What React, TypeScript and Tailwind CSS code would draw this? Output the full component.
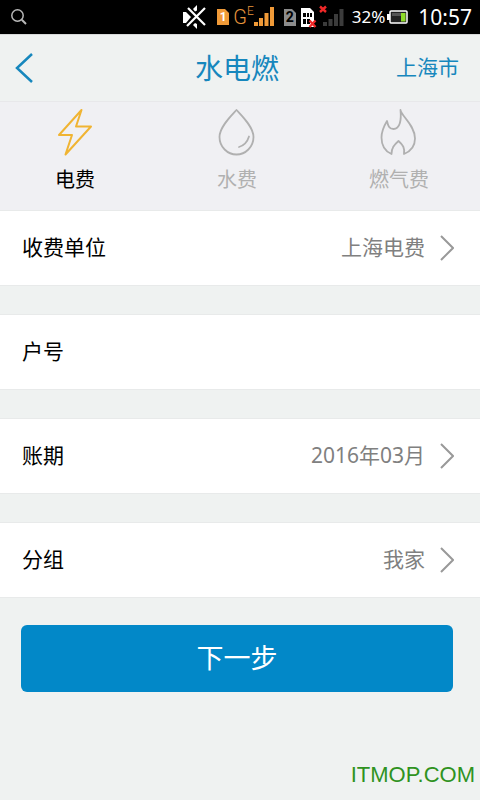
import React, { useState } from 'react';

interface RowProps {
    label: string;
    value: string;
}

const StatusBar: React.FC = () => (
    <div className="flex h-[34px] shrink-0 items-center bg-black pl-[11px] pr-2 text-white">
        <svg width="16" height="16" viewBox="0 0 16 16" fill="none" stroke="#b8b8b8" strokeWidth="1.5">
            <circle cx="6.5" cy="6.5" r="5.7" />
            <path d="M10.8 10.8 15 15" strokeWidth="2" />
        </svg>

        <div className="ml-auto flex items-center">
            {/* Muted speaker */}
            <svg width="24" height="24" viewBox="0 0 24 24" fill="none" stroke="#fff">
                <path d="M0 7h3l5 5-5 6H0z" fill="#fff" stroke="none" />
                <path d="M5 3 22 20M22 3 4 21" strokeWidth="2.2" />
                <path d="m10 4 4-4v5.500l-2 1zM10 20l4 4v-5l-2-1z" fill="#fff" stroke="none" />
            </svg>

            {/* First SIM */}
            <span className="relative ml-[10px] flex h-4 w-3 items-center justify-center font-['Roboto'] text-[12px] font-bold leading-4 text-white">
                <svg className="absolute inset-0" width="12" height="16" viewBox="0 0 12 16">
                    <path d="M0 0h8l4 4v12H0z" fill="#f09a38" />
                </svg>
                <span className="relative">1</span>
            </span>
            <span className="ml-1 flex h-6 items-start font-['Roboto'] font-light text-[#e8953c]">
                <span className="text-[20px] leading-[24px]">G</span>
                <span className="text-[12px] leading-[12px]">E</span>
            </span>
            <svg width="20" height="20" viewBox="0 0 20 20" fill="#f09a38">
                <path d="M0 15h4v4H0zM5 11h4v8H5zM10.500 6h4v13h-4zM16 0h4v19h-4z" />
            </svg>

            {/* Second SIM, no service */}
            <span className="relative ml-[10px] flex h-[17px] w-3 items-center justify-center font-['Roboto'] text-[14px] font-bold leading-4 text-black">
                <svg className="absolute inset-0" width="12" height="17" viewBox="0 0 12 17">
                    <path d="M0 0h8l4 4v13H0z" fill="#8c8c8c" />
                </svg>
                <span className="relative">2</span>
            </span>
            <svg className="ml-[5px]" width="43" height="24" viewBox="0 0 43 24">
                <path d="M0 3h9l4 4v15H0z" fill="#fff" />
                <path d="M2 8h3v4H2zM6 8h2v4H6zM9 8h2v4H9zM2 14h3v5H2zM6 14h3v5H6z" fill="#000" />
                <path d="m8.500 15.500 6 6.500M14.500 15.500l-6 6.500M19 1.500l6 5.500M25 1.500l-6 5.500" stroke="#f02828" strokeWidth="2.400" />
                <path d="M22 17h4v4h-4zM27.500 14h4v7h-4zM33 9h4v12h-4zM38.500 4h4v17h-4z" fill="#3c3c3c" />
            </svg>

            <span className="ml-2 font-['Noto_Sans'] text-[17px] leading-6">32%</span>
            <svg className="ml-[2px]" width="21" height="16" viewBox="0 0 21 16">
                <path d="M0 5h3v6H0z" fill="#fff" />
                <rect x="3" y="2" width="17" height="12" rx="1" fill="#222" stroke="#fff" strokeWidth="1.500" />
                <path d="M5 4h9v3H5z" fill="#555" />
                <path d="M14 4h4.500v8.500H14z" fill="#8edb28" />
            </svg>
            <span className="ml-[10px] font-['Noto_Sans'] text-[21px] leading-6">10:57</span>
        </div>
    </div>
);

const BoltIcon = () => (
    <svg width="54" height="48" viewBox="0 0 54 48" fill="none" stroke="currentColor" strokeWidth="2" strokeLinejoin="round">
        <path d="M33.500 2 11 27h13L17.500 46.500 43 18.500H28z" />
    </svg>
);

const DropIcon = () => (
    <svg width="54" height="48" viewBox="0 0 54 48" fill="none" stroke="currentColor" strokeWidth="1.800" strokeLinejoin="round" strokeLinecap="round">
        <path d="M26.500 2C21 8 9.500 19 9.500 29c0 10 8 17.500 17 17.500s17-7.500 17-17.500C43.500 19 32 8 26.500 2z" />
        <path d="M39 28.500c-1.500 5-5 9-10 10.500" />
    </svg>
);

const FlameIcon = () => (
    <svg width="54" height="48" viewBox="0 0 54 48" fill="none" stroke="currentColor" strokeWidth="1.800" strokeLinejoin="round">
        <path d="M28.500 2c0 5 14.500 15 14.500 28.500 0 6.500-3.500 12.500-11 15.500 1-6-1-9-5.500-13-4.500 4-7 7-7 13C12.500 43 9.500 37 9.500 29.500c0-6 2.500-11.500 5.500-16.500 1 4.500 2 8 6.500 8 6.500 0 8-9 7-19z" />
    </svg>
);

const Chevron = () => (
    <svg className="shrink-0" width="14" height="26" viewBox="0 0 14 26" fill="none" stroke="#999" strokeWidth="2">
        <path d="m1 1 12 12L1 25" />
    </svg>
);

const Row: React.FC<RowProps> = ({ label, value }) => (
    <button
        type="button"
        className="flex h-[76px] w-full items-center border-y border-[#e8eaea] bg-white pl-[22px] pr-[26px] text-left"
    >
        <span className="text-[21px] text-black">{label}</span>
        <span className="ml-auto mr-[15px] text-[21px] text-[#808080]">{value}</span>
        <Chevron />
    </button>
);

const tabs = [
    { id: 'power', label: '电费', Icon: BoltIcon },
    { id: 'water', label: '水费', Icon: DropIcon },
    { id: 'gas', label: '燃气费', Icon: FlameIcon },
];

const App: React.FC = () => {
    const [active, setActive] = useState('power');
    const [account, setAccount] = useState('');

    return (
        <div className="flex min-h-screen flex-col bg-[#eff2f1] font-['Noto_Sans','Noto_Sans_CJK_SC',sans-serif]">
            <StatusBar />

            <header className="grid h-[67px] shrink-0 grid-cols-3 items-center border-t border-[#d8dada] pl-[15px] pr-[21px] text-[#1687bd]">
                <button type="button" aria-label="返回" className="justify-self-start">
                    <svg width="18" height="30" viewBox="0 0 18 30" fill="none" stroke="currentColor" strokeWidth="2.500">
                        <path d="M17 1 2 15l15 14" />
                    </svg>
                </button>
                <h1 className="justify-self-center text-[28px] leading-10">水电燃</h1>
                <button type="button" className="justify-self-end text-[21px]">上海市</button>
            </header>

            <nav className="h-[109px] shrink-0 overflow-hidden border-t border-[#e8e8ea] bg-[#f0f0f3]">
                <div className="-ml-[6px] flex">
                    {tabs.map(({ id, label, Icon }) => (
                        <button
                            key={id}
                            type="button"
                            onClick={() => setActive(id)}
                            className="flex flex-1 flex-col items-center gap-2 pt-[6px]"
                        >
                            <span className={active === id ? 'text-[#f0b432]' : 'text-[#b0b0b0]'}>
                                <Icon />
                            </span>
                            <span className={`text-[20px] leading-8 ${active === id ? 'text-black' : 'text-[#b0b0b0]'}`}>
                                {label}
                            </span>
                        </button>
                    ))}
                </div>
            </nav>

            <main>
                <div className="flex flex-col gap-7">
                    <Row label="收费单位" value="上海电费" />
                    <div className="flex h-[76px] items-center border-y border-[#e8eaea] bg-white px-[22px]">
                        <label htmlFor="account" className="text-[21px] text-black">户号</label>
                        <input
                            id="account"
                            value={account}
                            onChange={(e) => setAccount(e.target.value)}
                            className="ml-4 min-w-0 flex-1 text-right text-[21px] text-[#808080] outline-none"
                        />
                    </div>
                    <Row label="账期" value="2016年03月" />
                    <Row label="分组" value="我家" />
                </div>
                <div className="pb-7 pl-[21px] pr-[27px] pt-[27px]">
                    <button type="button" className="h-[67px] w-full rounded-md bg-[#0288c8] text-[27px] text-white">
                        下一步
                    </button>
                </div>
            </main>

            <footer className="mt-auto pb-3 pr-[5px] text-right font-['Liberation_Sans',sans-serif] text-[22px] leading-[26px] text-[#2f931f]">
                ITMOP.COM
            </footer>
        </div>
    );
};

export default App;
